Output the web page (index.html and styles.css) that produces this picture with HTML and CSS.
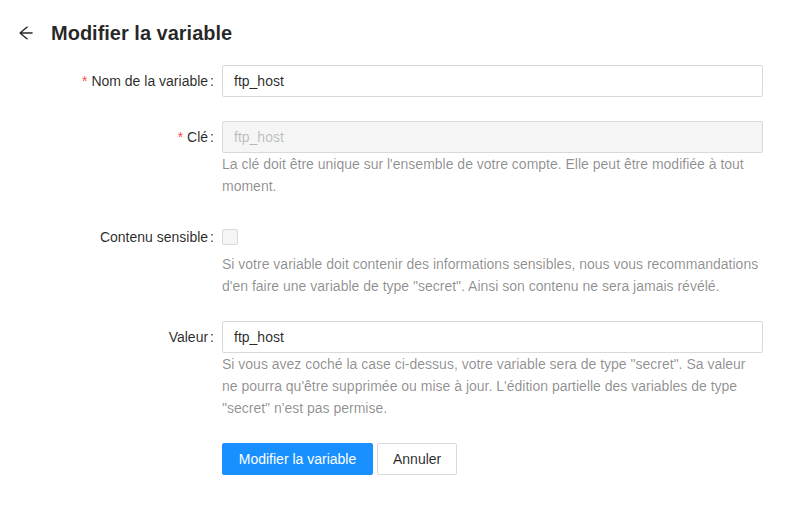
FILE: index.html
```html
<!DOCTYPE html>
<html lang="fr">
<head>
<meta charset="utf-8">
<title>Modifier la variable</title>
<link rel="stylesheet" href="styles.css">
</head>
<body>
<div class="page">
  <div class="header">
    <span class="back">
      <svg viewBox="64 64 896 896" width="16" height="16" fill="currentColor" aria-hidden="true"><path d="M872 474H286.9l350.3-304.1c5.6-4.9 2.2-14.1-5.2-14.1h-88.5c-3.9 0-7.6 1.4-10.5 3.9L155 487.8a31.96 31.96 0 000 48.3L535.1 866c1.5 1.3 3.3 2 5.2 2h91.5c7.4 0 10.8-9.2 5.2-14.1L286.9 550H872c4.4 0 8-3.6 8-8v-60c0-4.4-3.6-8-8-8z"/></svg>
    </span>
    <h1 class="title">Modifier la variable</h1>
  </div>

  <form class="form">
    <div class="item">
      <label class="label"><span class="req">*</span>Nom de la variable<span class="colon">:</span></label>
      <div class="control">
        <input class="input" type="text" value="ftp_host">
      </div>
    </div>

    <div class="item">
      <label class="label"><span class="req">*</span>Clé<span class="colon">:</span></label>
      <div class="control">
        <input class="input disabled" type="text" value="ftp_host" disabled>
        <div class="help">La clé doit être unique sur l'ensemble de votre compte. Elle peut être modifiée à tout moment.</div>
      </div>
    </div>

    <div class="item">
      <label class="label">Contenu sensible<span class="colon">:</span></label>
      <div class="control">
        <div class="check-row"><span class="checkbox"></span></div>
        <div class="help">Si votre variable doit contenir des informations sensibles, nous vous recommandations d'en faire une variable de type "secret". Ainsi son contenu ne sera jamais révélé.</div>
      </div>
    </div>

    <div class="item">
      <label class="label">Valeur<span class="colon">:</span></label>
      <div class="control">
        <input class="input" type="text" value="ftp_host">
        <div class="help">Si vous avez coché la case ci-dessus, votre variable sera de type "secret". Sa valeur ne pourra qu'être supprimée ou mise à jour. L'édition partielle des variables de type "secret" n'est pas permise.</div>
      </div>
    </div>

    <div class="item">
      <div class="label empty"></div>
      <div class="control actions">
        <button type="button" class="btn primary">Modifier la variable</button>
        <button type="button" class="btn">Annuler</button>
      </div>
    </div>
  </form>
</div>
</body>
</html>
```

FILE: styles.css
```css
html, body {
  margin: 0;
  padding: 0;
  background: #fff;
}

body {
  font-family: "Liberation Sans", Arial, sans-serif;
  font-size: 14px;
  color: rgba(0, 0, 0, 0.85);
}

.page {
  padding: 17px 0 0 0;
}

.header {
  display: flex;
  align-items: center;
  height: 32px;
  padding-left: 18px;
}

.back {
  display: flex;
  width: 16px;
  height: 16px;
  color: rgba(0, 0, 0, 0.85);
  margin-right: 17px;
}

.title {
  margin: 0;
  font-size: 20px;
  font-weight: bold;
  line-height: 32px;
  color: rgba(0, 0, 0, 0.85);
}

.form {
  margin-top: 16px;
}

.item {
  display: grid;
  grid-template-columns: 222px 541px;
  margin-bottom: 24px;
}

.label {
  display: flex;
  justify-content: flex-end;
  align-items: center;
  height: 32px;
  line-height: 32px;
  color: rgba(0, 0, 0, 0.85);
  white-space: nowrap;
}

.req {
  color: #ff4d4f;
  margin-right: 4px;
  font-family: SimSun, "Liberation Sans", sans-serif;
}

.colon {
  margin: 0 8px 0 2px;
}

.control {
  display: flex;
  flex-direction: column;
}

.input {
  box-sizing: border-box;
  width: 100%;
  height: 32px;
  padding: 4px 11px;
  border: 1px solid #d9d9d9;
  border-radius: 2px;
  font-family: inherit;
  font-size: 14px;
  color: rgba(0, 0, 0, 0.85);
  background: #fff;
  outline: none;
  margin: 0;
}

.input.disabled {
  background: #f5f5f5;
  color: rgba(0, 0, 0, 0.25);
}

.help {
  line-height: 22px;
  color: rgba(0, 0, 0, 0.45);
}

.check-row {
  height: 32px;
  display: flex;
  align-items: center;
}

.checkbox {
  box-sizing: border-box;
  width: 16px;
  height: 16px;
  border: 1px solid #d9d9d9;
  border-radius: 2px;
  background: #f5f5f5;
}

.actions {
  flex-direction: row;
  gap: 4px;
}

.btn {
  box-sizing: border-box;
  height: 32px;
  padding: 4px 15px;
  border: 1px solid #d9d9d9;
  border-radius: 2px;
  background: #fff;
  color: rgba(0, 0, 0, 0.85);
  font-family: inherit;
  font-size: 14px;
  line-height: 22px;
  cursor: pointer;
}

.btn.primary {
  width: 151px;
  padding: 4px 0;
  background: #1890ff;
  border-color: #1890ff;
  color: #fff;
}
```
